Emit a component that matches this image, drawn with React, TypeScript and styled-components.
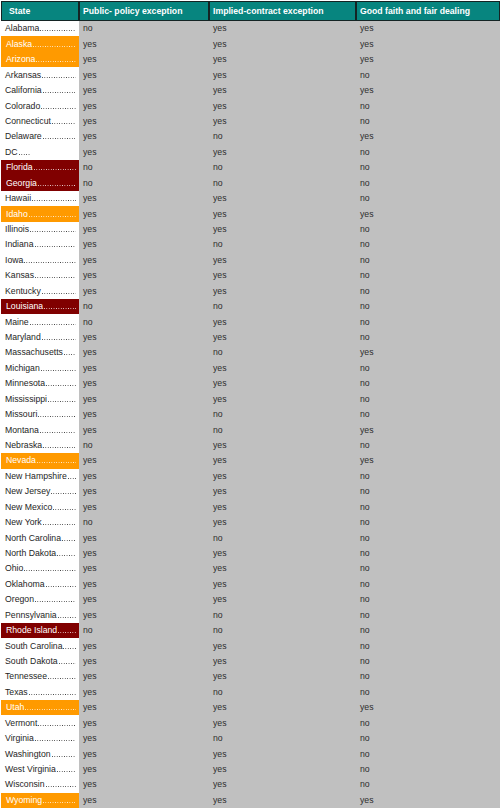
import React from "react";
import styled, { createGlobalStyle, css } from "styled-components";

const GlobalStyle = createGlobalStyle`
  html, body { margin: 0; padding: 0; background: #ffffff; }
  body { font-family: "Liberation Sans", Arial, sans-serif; }
`;

type Mark = "none" | "orange" | "maroon";
type Row = { state: string; shortDots?: boolean; mark: Mark; v: [string, string, string] };

const Y = "yes";
const N = "no";

const rows: Row[] = [
  { state: "Alabama", mark: "none", v: [N, Y, Y] },
  { state: "Alaska", mark: "orange", v: [Y, Y, Y] },
  { state: "Arizona", mark: "orange", v: [Y, Y, Y] },
  { state: "Arkansas", mark: "none", v: [Y, Y, N] },
  { state: "California", mark: "none", v: [Y, Y, Y] },
  { state: "Colorado", mark: "none", v: [Y, Y, N] },
  { state: "Connecticut", mark: "none", v: [Y, Y, N] },
  { state: "Delaware", mark: "none", v: [Y, N, Y] },
  { state: "DC", shortDots: true, mark: "none", v: [Y, Y, N] },
  { state: "Florida", mark: "maroon", v: [N, N, N] },
  { state: "Georgia", mark: "maroon", v: [N, N, N] },
  { state: "Hawaii", mark: "none", v: [Y, Y, N] },
  { state: "Idaho", mark: "orange", v: [Y, Y, Y] },
  { state: "Illinois", mark: "none", v: [Y, Y, N] },
  { state: "Indiana", mark: "none", v: [Y, N, N] },
  { state: "Iowa", mark: "none", v: [Y, Y, N] },
  { state: "Kansas", mark: "none", v: [Y, Y, N] },
  { state: "Kentucky", mark: "none", v: [Y, Y, N] },
  { state: "Louisiana", mark: "maroon", v: [N, N, N] },
  { state: "Maine", mark: "none", v: [N, Y, N] },
  { state: "Maryland", mark: "none", v: [Y, Y, N] },
  { state: "Massachusetts", mark: "none", v: [Y, N, Y] },
  { state: "Michigan", mark: "none", v: [Y, Y, N] },
  { state: "Minnesota", mark: "none", v: [Y, Y, N] },
  { state: "Mississippi", mark: "none", v: [Y, Y, N] },
  { state: "Missouri", mark: "none", v: [Y, N, N] },
  { state: "Montana", mark: "none", v: [Y, N, Y] },
  { state: "Nebraska", mark: "none", v: [N, Y, N] },
  { state: "Nevada", mark: "orange", v: [Y, Y, Y] },
  { state: "New Hampshire", mark: "none", v: [Y, Y, N] },
  { state: "New Jersey", mark: "none", v: [Y, Y, N] },
  { state: "New Mexico", mark: "none", v: [Y, Y, N] },
  { state: "New York", mark: "none", v: [N, Y, N] },
  { state: "North Carolina", mark: "none", v: [Y, N, N] },
  { state: "North Dakota", mark: "none", v: [Y, Y, N] },
  { state: "Ohio", mark: "none", v: [Y, Y, N] },
  { state: "Oklahoma", mark: "none", v: [Y, Y, N] },
  { state: "Oregon", mark: "none", v: [Y, Y, N] },
  { state: "Pennsylvania", mark: "none", v: [Y, N, N] },
  { state: "Rhode Island", mark: "maroon", v: [N, N, N] },
  { state: "South Carolina", mark: "none", v: [Y, Y, N] },
  { state: "South Dakota", mark: "none", v: [Y, Y, N] },
  { state: "Tennessee", mark: "none", v: [Y, Y, N] },
  { state: "Texas", mark: "none", v: [Y, N, N] },
  { state: "Utah", mark: "orange", v: [Y, Y, Y] },
  { state: "Vermont", mark: "none", v: [Y, Y, N] },
  { state: "Virginia", mark: "none", v: [Y, N, N] },
  { state: "Washington", mark: "none", v: [Y, Y, N] },
  { state: "West Virginia", mark: "none", v: [Y, Y, N] },
  { state: "Wisconsin", mark: "none", v: [Y, Y, N] },
  { state: "Wyoming", mark: "orange", v: [Y, Y, Y] },
];

const headers = [
  "State",
  "Public- policy exception",
  "Implied-contract exception",
  "Good faith and fair dealing",
];

const Table = styled.div`
  display: grid;
  width: 500px;
  height: 808px;
  grid-template-columns: 79px 130px 147px 144px;
  grid-template-rows: 21px repeat(51, 1fr);
  background: #ffffff;
  font-size: 8.7px;
  line-height: 1;
`;

const HeaderCell = styled.div<{ $first?: boolean }>`
  display: flex;
  align-items: center;
  box-sizing: border-box;
  padding: 0 0 0 ${(p) => (p.$first ? "7px" : "3px")};
  margin-top: 1px;
  background: #07857f;
  border: 1px solid #142424;
  ${(p) =>
    p.$first &&
    css`
      margin-left: 1px;
    `}
  color: #ffffff;
  font-weight: bold;
  white-space: nowrap;
  overflow: hidden;
`;

const markBg: Record<Mark, string> = {
  none: "#ffffff",
  orange: "#ff9a00",
  maroon: "#800000",
};

const StateCell = styled.div<{ $mark: Mark }>`
  display: flex;
  align-items: center;
  box-sizing: border-box;
  padding: 0 3px 0 5px;
  margin-left: ${(p) => (p.$mark === "none" ? "0" : "1px")};
  background: ${(p) => markBg[p.$mark]};
  color: ${(p) => (p.$mark === "none" ? "#1e1e1e" : "#ffffff")};
  overflow: hidden;
`;

const NameLine = styled.div`
  display: flex;
  align-items: baseline;
  flex: 1;
  min-width: 0;
  white-space: nowrap;
`;

const Leader = styled.span<{ $short?: boolean }>`
  display: inline-block;
  height: 1px;
  margin-left: 1px;
  ${(p) =>
    p.$short
      ? css`
          flex: none;
          width: 12px;
        `
      : css`
          flex: 1;
          min-width: 0;
        `}
  background-image: linear-gradient(to right, currentColor 1px, transparent 1px);
  background-size: 2.42px 1px;
  background-repeat: repeat-x;
  opacity: 0.85;
`;

const ValueCell = styled.div`
  display: flex;
  align-items: center;
  box-sizing: border-box;
  padding-left: 4px;
  background: #c0c0c0;
  color: #2e2e2e;
  white-space: nowrap;
`;

export default function App() {
  return (
    <>
      <GlobalStyle />
      <Table role="table">
        {headers.map((h, i) => (
          <HeaderCell key={h} $first={i === 0} role="columnheader">
            {h}
          </HeaderCell>
        ))}
        {rows.map((r) => (
          <React.Fragment key={r.state}>
            <StateCell $mark={r.mark} role="rowheader">
              <NameLine>
                <span>{r.state}</span>
                <Leader $short={r.shortDots} aria-hidden="true" />
              </NameLine>
            </StateCell>
            {r.v.map((val, i) => (
              <ValueCell key={i} role="cell">
                {val}
              </ValueCell>
            ))}
          </React.Fragment>
        ))}
      </Table>
    </>
  );
}
